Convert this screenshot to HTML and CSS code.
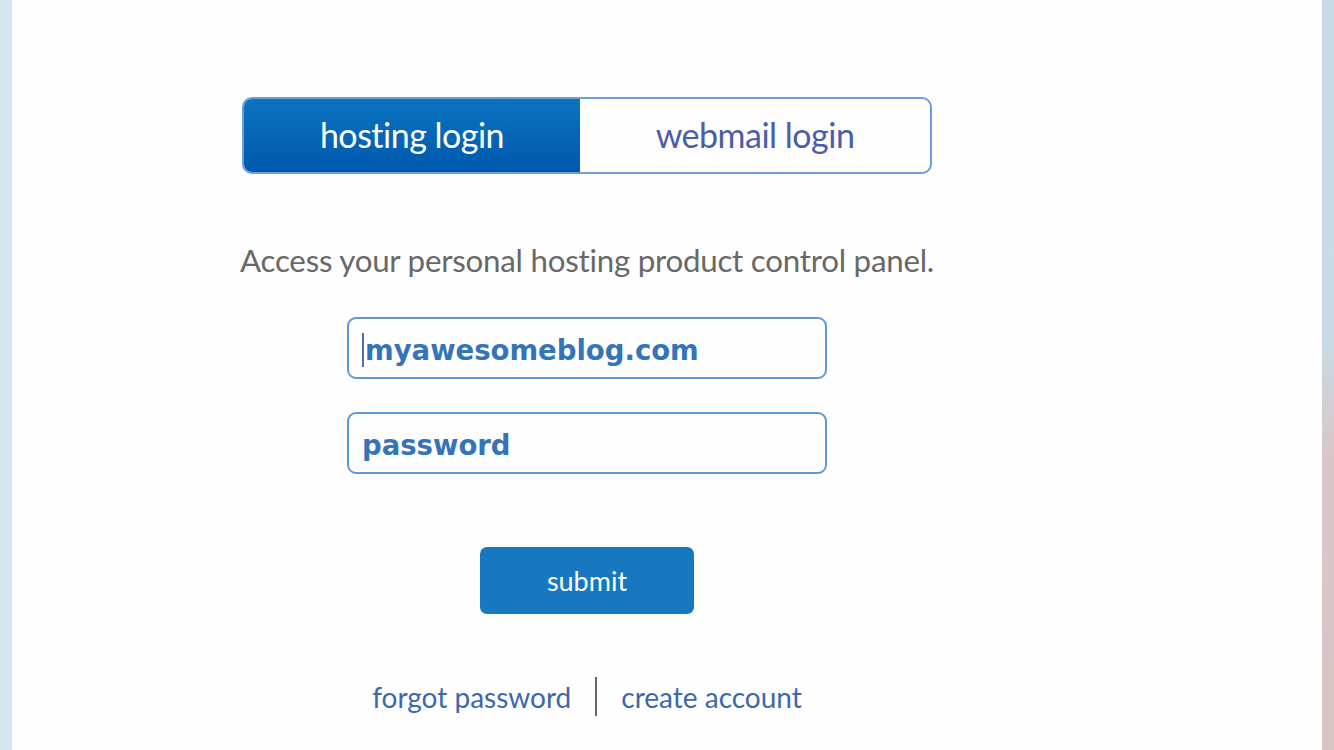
FILE: index.html
```html
<!DOCTYPE html>
<html lang="en">
  <head>
    <link rel="stylesheet" href="styles.css">
    <meta charset="UTF-8" />
    <meta name="viewport" content="width=device-width, initial-scale=1.0" />
    <title>Login</title>
  </head>
  <body>
    <div class="page">
      <div class="side side-left"></div>
      <div class="panel">
        <div class="login">
          <div class="tabs">
            <div class="tab active">hosting login</div>
            <div class="tab">webmail login</div>
          </div>
          <p class="intro">Access your personal hosting product control panel.</p>
          <div class="field"><span class="caret"></span>myawesomeblog.com</div>
          <div class="field">password</div>
          <button type="button" class="submit">submit</button>
          <div class="links">
            <a href="#">forgot password</a>
            <span class="sep"></span>
            <a href="#">create account</a>
          </div>
        </div>
      </div>
      <div class="side side-right"></div>
    </div>
  </body>
</html>
```

FILE: styles.css
```css
* {
  box-sizing: border-box;
}
body {
  margin: 0;
  font-family: Lato, "Open Sans", sans-serif;
}
.page {
  display: flex;
  height: 750px;
}
.side {
  width: 12px;
}
.side-left {
  background: #d6e6ee;
}
.side-right {
  background: linear-gradient(#c6dbe7 0%, #c8dbe5 45%, #d8c7c9 60%, #d8c5c6 100%);
}
.panel {
  flex: 1;
  background: #fefefe;
}
.login {
  width: 690px;
  margin-left: 230px;
  padding-top: 97px;
  display: flex;
  flex-direction: column;
  align-items: center;
}
.tabs {
  display: flex;
  width: 690px;
  height: 77px;
  border: 2px solid #6b9fd6;
  border-radius: 10px;
  overflow: hidden;
}
.tab {
  flex: 1;
  display: flex;
  align-items: center;
  justify-content: center;
  font-size: 34px;
  letter-spacing: -0.5px;
  color: #4a5ea6;
  padding-bottom: 2px;
}
.tab.active {
  flex: 0 0 336px;
  color: #ffffff;
  background: linear-gradient(#0b74bf, #0058ae);
}
.intro {
  margin: 68px 0 0;
  font-size: 31.3px;
  line-height: 36px;
  color: #686868;
  letter-spacing: -0.25px;
  white-space: nowrap;
}
.field {
  width: 480px;
  height: 62px;
  margin-top: 39px;
  border: 2px solid #5c9ad6;
  border-radius: 9px;
  padding-left: 13px;
  padding-top: 4px;
  display: flex;
  align-items: center;
  font-family: "DejaVu Sans", sans-serif;
  font-weight: bold;
  font-size: 27.5px;
  color: #3474b8;
}
.field + .field {
  margin-top: 33px;
}
.caret {
  width: 2px;
  height: 34px;
  background: #4c6fa8;
  margin-right: 1px;
}
.submit {
  margin-top: 73px;
  width: 214px;
  height: 67px;
  border: none;
  border-radius: 7px;
  background: #1777bf;
  color: #ffffff;
  font-family: Lato, sans-serif;
  font-size: 27px;
  cursor: pointer;
}
.links {
  margin-top: 63px;
  display: flex;
  align-items: center;
  gap: 24px;
}
.links a {
  font-size: 28px;
  color: #3c68ad;
  text-decoration: none;
}
.sep {
  width: 2px;
  height: 39px;
  background: #666;
}
```
